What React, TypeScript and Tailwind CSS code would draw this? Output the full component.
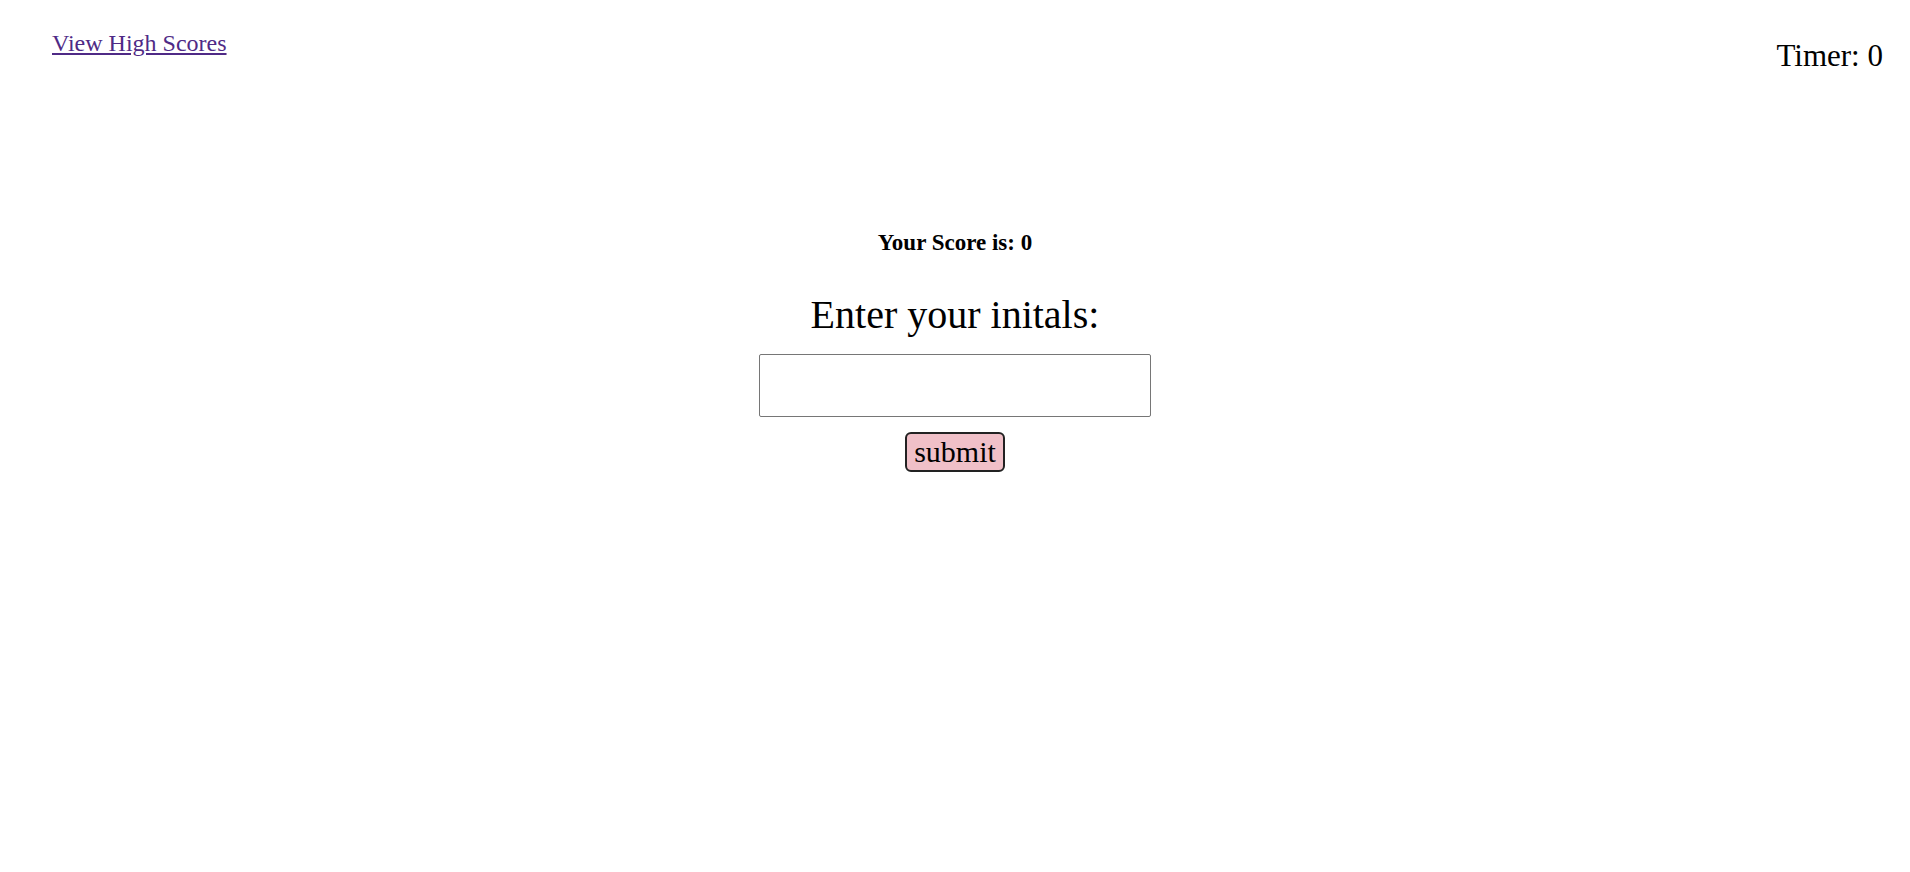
import React from "react";

export default function App() {
  return (
    <div className="min-h-screen w-full bg-white text-black" style={{ fontFamily: '"Liberation Serif", "Times New Roman", serif' }}>
      <header className="flex items-start justify-between">
        <a href="#" className="ml-[52px] mt-[29px] text-[24px] leading-[28px] text-[#4f2a86] underline">
          View High Scores
        </a>
        <div className="mr-[27px] mt-[38px] text-[31px] leading-[36px]">Timer: 0</div>
      </header>
      <main className="flex flex-col items-center">
        <h3 className="mt-[156px] text-[23px] font-bold leading-[26px]">Your Score is: 0</h3>
        <h2 className="mt-[36px] text-[40px] leading-[46px]">Enter your initals:</h2>
        <input
          type="text"
          className="mt-[16px] h-[63px] w-[392px] rounded-[2px] border border-[#767676] bg-white px-2 text-[24px] outline-none"
        />
        <button className="mt-[15px] h-[40px] w-[100px] rounded-[6px] border-2 border-[#222] bg-[#f0c0c8] text-[30px] leading-[32px]">
          submit
        </button>
      </main>
    </div>
  );
}
